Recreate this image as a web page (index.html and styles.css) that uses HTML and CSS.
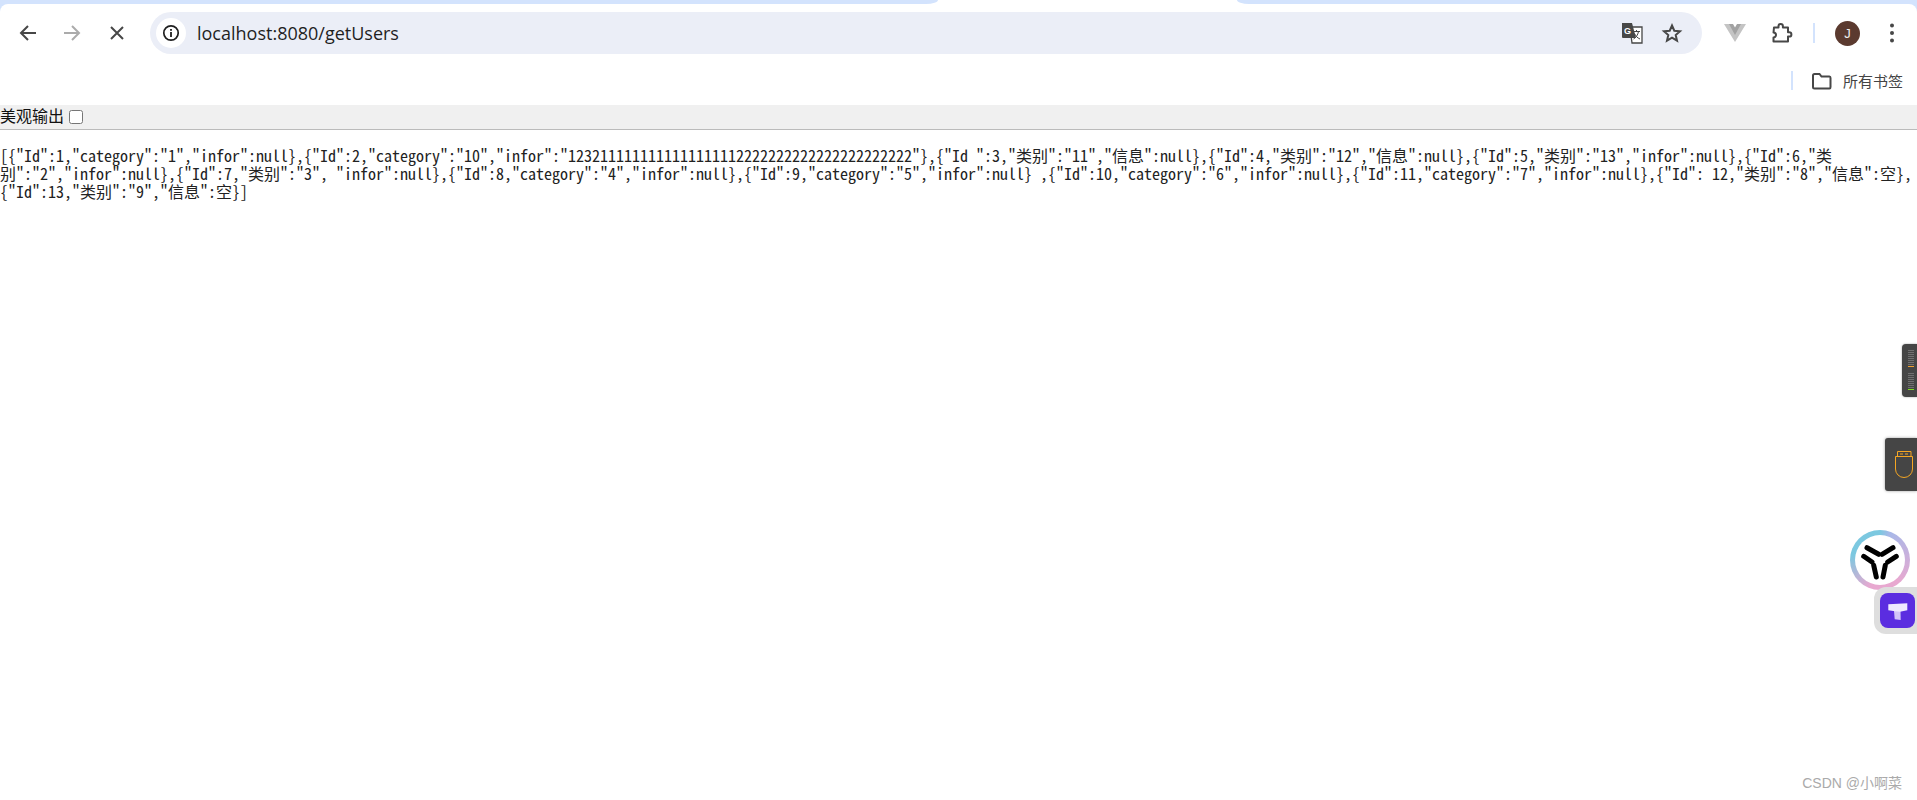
FILE: index.html
```html
<!DOCTYPE html>
<html lang="zh">
<head>
<meta charset="utf-8">
<title>localhost:8080/getUsers</title>
<link rel="stylesheet" href="styles.css">
</head>
<body>
<header class="browser">
  <div class="tabstrip">
    <span class="strip-seg strip-left"></span>
    <span class="strip-seg strip-right"></span>
  </div>
  <div class="toolbar">
    <svg class="nav nav-back" width="24" height="24" viewBox="0 0 24 24"><path d="M20 12H5M12 5l-7 7 7 7" fill="none" stroke="#474747" stroke-width="2"/></svg>
    <svg class="nav nav-forward" width="24" height="24" viewBox="0 0 24 24"><path d="M4 12h15M12 5l7 7-7 7" fill="none" stroke="#ababab" stroke-width="2"/></svg>
    <svg class="nav nav-stop" width="24" height="24" viewBox="0 0 24 24"><path d="M6 6l12 12M18 6L6 18" fill="none" stroke="#474747" stroke-width="2"/></svg>
    <div class="omnibox">
      <span class="site-info">
        <svg width="18" height="18" viewBox="0 0 18 18"><circle cx="9" cy="9" r="7.2" fill="none" stroke="#1f1f1f" stroke-width="1.7"/><rect x="8.1" y="8" width="1.8" height="5" fill="#1f1f1f"/><rect x="8.1" y="5" width="1.8" height="1.8" fill="#1f1f1f"/></svg>
      </span>
      <span class="url">localhost:8080/getUsers</span>
      <svg class="omni-icon" width="22" height="22" viewBox="0 0 22 22"><path d="M9 5h12v16H11z" fill="#fff" stroke="#474747" stroke-width="1.3"/><path d="M1 1h10l4 15H2q-1 0-1-1z" fill="#474747"/><text x="3" y="12" class="translate-g">G</text><path d="M12.500 9.500h6.500M15.500 8v1.500M17.500 9.500c-.6 3.500-2.500 6-5 7.500M13.500 11.500c1 2.500 3 4.500 5.500 5.500" fill="none" stroke="#474747" stroke-width="1"/></svg>
      <svg class="omni-icon omni-star" width="22" height="22" viewBox="0 0 22 22"><path d="M11 3.500l2.300 5.200 5.700.5-4.300 3.800 1.300 5.600-5-3-5 3 1.300-5.600L3 9.200l5.700-.5z" fill="none" stroke="#474747" stroke-width="2"/></svg>
    </div>
    <svg class="ext-vue" width="22" height="20" viewBox="0 0 22 20"><path d="M0 1h7l4 7 4-7h7L11 19z" fill="#c4c4c4"/><path d="M5 1h4l2 3.500L13 1h4l-6 11z" fill="#a2a2a2"/></svg>
    <svg class="ext-puzzle" width="22" height="22" viewBox="0 0 22 22"><path d="M3 5.500h4.500V4.200a2.200 2.200 0 0 1 4.400 0v1.300H17v4.700h1.200a2.200 2.200 0 0 1 0 4.400H17V19.500H2.500v-4a2.500 2.500 0 0 0 0-5z" fill="none" stroke="#474747" stroke-width="2" stroke-linejoin="round"/></svg>
    <span class="tool-sep"></span>
    <span class="avatar">J</span>
    <svg class="menu-dots" width="6" height="20" viewBox="0 0 6 20"><circle cx="3" cy="2.500" r="2" fill="#474747"/><circle cx="3" cy="10" r="2" fill="#474747"/><circle cx="3" cy="17.500" r="2" fill="#474747"/></svg>
  </div>
  <div class="bookmarks">
    <span class="bm-sep"></span>
    <svg class="bm-folder" width="22" height="20" viewBox="0 0 22 20"><path d="M3 4.500q0-1.500 1.500-1.500h5l2 2.500h8q1 0 1 1.500v9q0 1.500-1 1.500h-15Q3 17.500 3 16z" fill="none" stroke="#474747" stroke-width="2"/></svg>
    <span class="bm-label">所有书签</span>
  </div>
</header>
<main class="page">
  <div class="prettyprint">美观输出 <input type="checkbox" class="pretty-check"></div>
  <pre class="json">[{"Id":1,"category":"1","infor":null},{"Id":2,"category":"10","infor":"1232111111111111111112222222222222222222222"},{"Id ":3,"类别":"11","信息":null},{"Id":4,"类别":"12","信息":null},{"Id":5,"类别":"13","infor":null},{"Id":6,"类别":"2","infor":null},{"Id":7,"类别":"3", "infor":null},{"Id":8,"category":"4","infor":null},{"Id":9,"category":"5","infor":null} ,{"Id":10,"category":"6","infor":null},{"Id":11,"category":"7","infor":null},{"Id": 12,"类别":"8","信息":空},{"Id":13,"类别":"9","信息":空}]</pre>
</main>
<div class="float float-meter">
  <svg width="10" height="44" viewBox="0 0 10 44"><path d="M2 1.500h6M2 3.500h6M2 5.500h6M2 7.500h6M2 9.500h6M2 11.500h6M2 13.500h6M2 15.500h6M2 24.500h6M2 26.500h6M2 28.500h6M2 30.500h6M2 32.500h6M2 34.500h6M2 36.500h6M2 38.500h6" stroke="#707070" stroke-width="1"/><path d="M2 17.500h6" stroke="#f0a030"/><path d="M2 40.500h6" stroke="#7fe020"/></svg>
</div>
<div class="float float-usb">
  <svg width="22" height="30" viewBox="0 0 22 30"><path d="M4.500 6.500V1.500h13.500v5M7 4h3M12 4h3" fill="none" stroke="#f5a623"/><path d="M2.500 6.500h17v12.500a8.500 8.500 0 0 1-17 0z" fill="none" stroke="#f5a623"/></svg>
</div>
<div class="float float-ring">
  <div class="ring-inner">
    <svg width="40" height="40" viewBox="0 0 40 40"><g stroke="#000" stroke-width="5" stroke-linecap="round" fill="none"><path d="M7 7.700l11.700 6.600M33 7.700l-11 6.600M3.700 16.300L12 22M36.300 16.300L27.700 22M13.700 25.300L16.300 37M25.300 25.300L23 37"/></g></svg>
  </div>
</div>
<div class="float float-tile">
  <div class="tile-inner">
    <svg width="20" height="20" viewBox="0 0 20 20"><path d="M6 10h6.500l.2 9-6-.7z" fill="#d2c4f8"/><path d="M.3 3.300L19.300 2.300v7L12 10.700 5.300 10 .3 9.300z" fill="#efe9ff"/></svg>
  </div>
</div>
<div class="watermark">CSDN @小啊菜</div>
</body>
</html>
```
FILE: styles.css
```css
* { box-sizing: border-box; }
html, body { margin: 0; padding: 0; height: 100%; overflow: hidden; background: #fff; }
body { position: relative; font-family: "Liberation Sans", "Noto Sans CJK SC", sans-serif; }

.browser { background: #d3e3fd; }
.tabstrip { height: 4px; background: #fff; display: flex; justify-content: space-between; }
.strip-seg { display: block; height: 4px; background: #d3e3fd; }
.strip-left { width: 938px; border-bottom-right-radius: 12px 4px; }
.strip-right { width: 680px; border-bottom-left-radius: 12px 4px; }
.toolbar { height: 58px; display: flex; align-items: center; padding-left: 16px; background: #fff; border-radius: 8px 8px 0 0; }
.nav { flex: none; }
.nav-back { margin-right: 20px; }
.nav-forward { margin-right: 21px; }
.nav-stop { margin-right: 21px; }
.omnibox { flex: none; width: 1552px; height: 42px; background: #ebeef7; border-radius: 21px; display: flex; align-items: center; padding: 0 19px 0 6px; }
.site-info { width: 30px; height: 30px; border-radius: 50%; background: #fff; display: flex; align-items: center; justify-content: center; flex: none; }
.url { margin-left: 11px; font: 18px "Open Sans", "Liberation Sans", sans-serif; color: #1f1f1f; flex: 1; }
.omni-icon { flex: none; }
.omni-star { margin-left: 18px; }
.translate-g { font: bold 9px "Liberation Sans", sans-serif; fill: #fff; }
.ext-vue { margin-left: 22px; flex: none; }
.ext-puzzle { margin-left: 25px; flex: none; }
.tool-sep { width: 2px; height: 20px; background: #d3e3fd; margin-left: 20px; flex: none; }
.avatar { margin-left: 20px; width: 25px; height: 25px; border-radius: 50%; background: #5b3a2f; color: #eee; font-size: 13px; display: flex; align-items: center; justify-content: center; flex: none; }
.menu-dots { margin-left: 29px; flex: none; }
.bookmarks { height: 43px; padding-right: 14px; padding-bottom: 6px; display: flex; align-items: center; justify-content: flex-end; background: #fff; }
.bm-sep { width: 2px; height: 19px; background: #d3e3fd; margin-right: 17px; }
.bm-folder { margin-right: 11px; }
.bm-label { font-size: 15px; color: #444; }

.prettyprint { height: 25px; background: #f0f0f0; border-bottom: 1px solid #bbb; font-size: 16px; line-height: 24px; color: #111; display: flex; align-items: center; white-space: pre; }
.pretty-check { margin: 0 0 0 1px; width: 14px; height: 14px; }
.json { margin: 0; padding: 16px 0 0 0; font-family: "Noto Sans Mono CJK SC", "Noto Sans CJK SC", monospace; font-size: 16px; line-height: 18px; white-space: pre-wrap; overflow-wrap: break-word; color: #222; }

.float { position: absolute; }
.float-meter { left: 1902px; top: 344px; width: 15px; height: 53px; background: #454545; border-radius: 4px 0 0 4px; box-shadow: 0 0 2px #999; padding: 5px 0 0 4px; }
.float-usb { left: 1885px; top: 438px; width: 32px; height: 53px; background: #454545; border-radius: 3px 0 0 3px; box-shadow: 0 0 3px #999; padding: 12px 0 0 8px; }
.float-ring { left: 1850px; top: 530px; width: 60px; height: 60px; border-radius: 50%; background: conic-gradient(from 20deg, #a8b8e8, #e8a8d0 120deg, #e8a8d0 180deg, #7cc8e0 260deg, #7cc8e0 340deg, #a8b8e8); padding: 5px; }
.ring-inner { width: 100%; height: 100%; border-radius: 50%; background: #fff; display: flex; align-items: center; justify-content: center; }
.float-tile { left: 1874px; top: 587px; width: 43px; height: 47px; background: #dedede; border-radius: 12px 0 0 12px; padding: 6px 0 0 6px; }
.tile-inner { width: 35px; height: 35px; background: #5b2de0; border-radius: 8px; display: flex; align-items: center; justify-content: center; }
.watermark { position: absolute; right: 15px; top: 772px; font-size: 14px; color: #aaa; }
```
